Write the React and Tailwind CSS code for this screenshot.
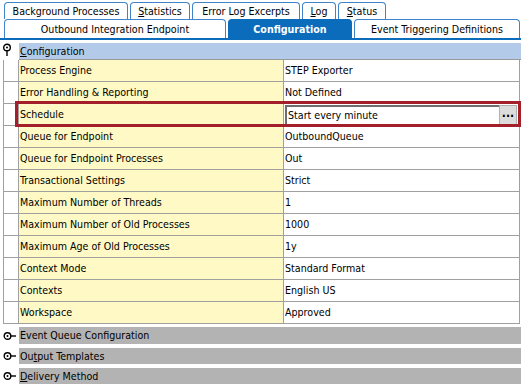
import React from "react";

const FONT = { fontFamily: '"DejaVu Sans Condensed", "Liberation Sans", Arial, sans-serif' };

function Tab({ w, ml, children, active }) {
  return (
    <div
      className={
        "h-full flex items-center justify-center border border-b-0 rounded-t-[4px] " +
        (active
          ? "bg-[#0b6cbc] border-[#0b6cbc] text-white font-bold"
          : "bg-white border-[#3f84c9] text-black")
      }
      style={{ width: w, marginLeft: ml }}
    >
      {children}
    </div>
  );
}

function PinIcon() {
  return (
    <svg width="10" height="14" viewBox="0 0 10 14">
      <circle cx="5" cy="4.5" r="3.3" fill="none" stroke="#000" strokeWidth="1.4" />
      <circle cx="5" cy="4.5" r="1" fill="#000" />
      <line x1="5" y1="8" x2="5" y2="13" stroke="#000" strokeWidth="1.4" />
    </svg>
  );
}

function CollapsedIcon() {
  return (
    <svg width="14" height="10" viewBox="0 0 14 10">
      <circle cx="4.5" cy="5" r="3.3" fill="none" stroke="#000" strokeWidth="1.4" />
      <circle cx="4.5" cy="5" r="1" fill="#000" />
      <line x1="8" y1="5" x2="13" y2="5" stroke="#000" strokeWidth="1.4" />
    </svg>
  );
}

const rows = [
  ["Process Engine", "STEP Exporter"],
  ["Error Handling & Reporting", "Not Defined"],
  ["Schedule", null],
  ["Queue for Endpoint", "OutboundQueue"],
  ["Queue for Endpoint Processes", "Out"],
  ["Transactional Settings", "Strict"],
  ["Maximum Number of Threads", "1"],
  ["Maximum Number of Old Processes", "1000"],
  ["Maximum Age of Old Processes", "1y"],
  ["Context Mode", "Standard Format"],
  ["Contexts", "English US"],
  ["Workspace", "Approved"],
];

export default function App() {
  return (
    <div className="w-[521px] h-[384px] bg-white overflow-hidden relative text-[10.6px] text-black leading-none" style={FONT}>
      {/* tab row 1 */}
      <div className="flex h-[19px] pt-[2px] pl-[4px]">
        <Tab w={124}>Background Processes</Tab>
        <Tab w={60} ml={2}><span><u>S</u>tatistics</span></Tab>
        <Tab w={108} ml={2}>Error Log Excerpts</Tab>
        <Tab w={34} ml={2}><span><u>L</u>og</span></Tab>
        <Tab w={48} ml={2}><span><u>S</u>tatus</span></Tab>
      </div>
      {/* tab row 2 */}
      <div className="flex h-[19px] pl-[4px]">
        <Tab w={222}>Outbound Integration Endpoint</Tab>
        <Tab w={124} ml={2} active>Configuration</Tab>
        <Tab w={166} ml={2}>Event Triggering Definitions</Tab>
      </div>
      <div className="h-[2px] bg-[#0b6cbc]" />
      <div className="h-[3px]" />
      {/* header */}
      <div className="flex h-[17px]">
        <div className="w-[19px] flex justify-start pl-[2px] pt-0">
          <PinIcon />
        </div>
        <div className="flex-1 bg-[#b3cbe9] border-b border-[#9a9a9a] flex items-center pl-[1px]">
          <span><u>C</u>onfiguration</span>
        </div>
      </div>
      {/* table */}
      <div className="ml-[3px] w-[517px] border-l border-r border-[#a0a0a0]">
        {rows.map(([k, v]) => (
          <div key={k} className="flex h-[22px] border-b border-[#a0a0a0]">
            <div className="w-[15px] border-r border-[#a0a0a0] bg-white" />
            <div className="w-[265px] bg-[#fff9c6] border-r border-[#a0a0a0] flex items-center pl-[1px]">
              {k}
            </div>
            <div className="flex-1 bg-white flex items-center pl-[1px]">
              {v === null ? (
                <div className="flex w-full h-[22px] items-center">
                  <div className="flex-1 h-[21px] mt-[1px] border-l-2 border-t-2 border-[#6e6e6e] border-b-2 border-b-[#1b2d5e] flex items-center pl-[1px] bg-white">
                    Start every minute
                  </div>
                  <div className="w-[18px] h-[20px] bg-[#dcdcdc] border border-[#b0b0b0] flex items-end justify-center pb-[5px] text-[12px] font-bold">
                    ...
                  </div>
                  <div className="w-[2px]" />
                </div>
              ) : (
                v
              )}
            </div>
          </div>
        ))}
      </div>
      {/* collapsed sections */}
      <div className="flex flex-col gap-[4px] mt-[3px]">
        {[
          [<span key="a">Event Queue Configuration</span>, 17],
          [<span key="b">Ou<u>t</u>put Templates</span>, 16],
          [<span key="c"><u>D</u>elivery Method</span>, 16],
        ].map(([label, h], i) => (
          <div key={i} className="flex" style={{ height: h }}>
            <div className="w-[19px] flex items-center pl-[3px]">
              <CollapsedIcon />
            </div>
            <div className="flex-1 bg-[#b3b3b3] flex items-center pl-[1px]">{label}</div>
          </div>
        ))}
      </div>
      {/* highlight overlay */}
      <div className="absolute left-[15px] top-[101px] w-[506px] h-[26px] border-[3px] border-[#a3202a] pointer-events-none" />
    </div>
  );
}
